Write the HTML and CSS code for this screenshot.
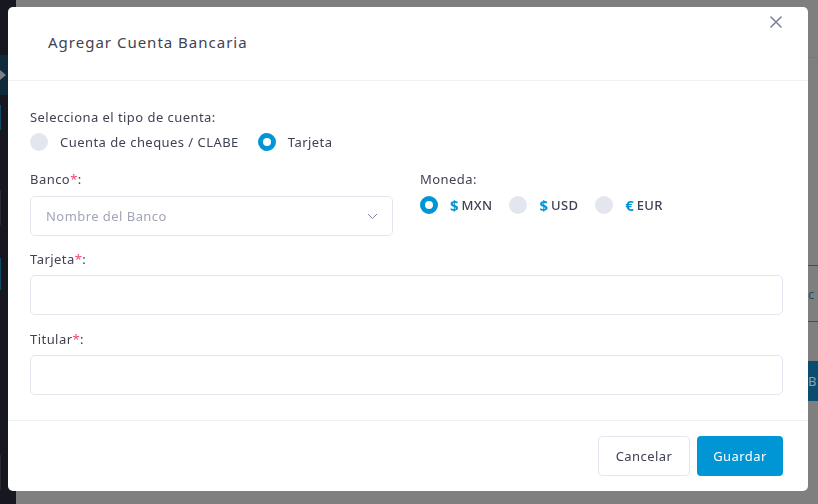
FILE: index.html
```html
<!DOCTYPE html>
<html lang="es">
<head>
<meta charset="utf-8">
<title>Agregar Cuenta Bancaria</title>
<link rel="stylesheet" href="styles.css">
</head>
<body>
<div class="page">
  <aside class="sidebar">
    <div class="side-top"></div>
    <div class="side-item active"><span class="side-arrow"></span></div>
    <div class="side-mark teal m1"></div>
    <div class="side-mark gray m2"></div>
    <div class="side-mark teal m3"></div>
    <div class="side-mark gray m4"></div>
  </aside>
  <main class="main">
    <div class="main-top"></div>
    <div class="main-gap1"></div>
    <div class="main-row"><span class="row-text">c</span></div>
    <div class="main-gap2"></div>
    <div class="main-btn"><span class="btn-text">B</span></div>
  </main>
</div>

<div class="modal" role="dialog" aria-labelledby="modal-title">
  <header class="modal-header">
    <h2 id="modal-title" class="modal-title">Agregar Cuenta Bancaria</h2>
    <button class="close" aria-label="Cerrar">
      <svg width="12" height="12" viewBox="0 0 12 12"><path d="M1 1L11 11M11 1L1 11" stroke="#7e8299" stroke-width="1.6" stroke-linecap="round"/></svg>
    </button>
  </header>
  <section class="modal-body">
    <div class="group">
      <div class="label">Selecciona el tipo de cuenta:</div>
      <div class="radios">
        <label class="radio"><span class="dot"></span><span class="radio-text">Cuenta de cheques / CLABE</span></label>
        <label class="radio"><span class="dot checked"></span><span class="radio-text">Tarjeta</span></label>
      </div>
    </div>
    <div class="split">
      <div class="col">
        <div class="label">Banco<span class="req">*</span>:</div>
        <div class="select">
          <span class="placeholder">Nombre del Banco</span>
          <svg width="11" height="7" viewBox="0 0 11 7"><path d="M1 1L5.5 5.5L10 1" fill="none" stroke="#7e8299" stroke-width="1"/></svg>
        </div>
      </div>
      <div class="col">
        <div class="label">Moneda:</div>
        <div class="radios currency">
          <label class="radio"><span class="dot checked"></span><span class="cur-sym">$</span><span class="cur-code">MXN</span></label>
          <label class="radio"><span class="dot"></span><span class="cur-sym">$</span><span class="cur-code">USD</span></label>
          <label class="radio"><span class="dot"></span><span class="cur-sym">€</span><span class="cur-code">EUR</span></label>
        </div>
      </div>
    </div>
    <div class="field">
      <div class="label">Tarjeta<span class="req">*</span>:</div>
      <div class="input"></div>
    </div>
    <div class="field">
      <div class="label">Titular<span class="req">*</span>:</div>
      <div class="input"></div>
    </div>
  </section>
  <footer class="modal-footer">
    <button class="btn btn-light">Cancelar</button>
    <button class="btn btn-primary">Guardar</button>
  </footer>
</div>
</body>
</html>
```
FILE: styles.css
```css
* { box-sizing: border-box; }
html, body { margin: 0; padding: 0; }
body {
  width: 818px;
  height: 504px;
  overflow: hidden;
  background: #7f7f7f;
  font-family: "Noto Sans", "Liberation Sans", sans-serif;
  color: #3f4254;
}
.page { display: flex; height: 504px; }
.sidebar {
  width: 16px;
  background: #17171f;
  display: flex;
  flex-direction: column;
}
.side-top { height: 55px; }
.side-item.active {
  height: 40px;
  background: #0f2a3a;
  display: flex;
  align-items: center;
}
.side-arrow {
  width: 0; height: 0;
  border-top: 5px solid transparent;
  border-bottom: 5px solid transparent;
  border-left: 6px solid #7a7f86;
}
.side-mark { width: 1px; }
.side-mark.teal { background: #0c4a66; }
.side-mark.gray { background: #2a2a33; }
.m1 { height: 25px; margin-top: 10px; }
.m2 { height: 35px; margin-top: 60px; }
.m3 { height: 32px; margin-top: 33px; }
.m4 { height: 35px; margin-top: 165px; }

.main { flex: 1; display: flex; flex-direction: column; align-items: flex-end; }
.main-top { height: 58px; width: 100%; border-bottom: 1px solid #787878; }
.main-gap1 { height: 207px; }
.main-row {
  width: 10px; height: 57px;
  border-top: 1px solid #1e5b7a;
  border-bottom: 1px solid #1e5b7a;
  display: flex; align-items: center;
  font-size: 13px; color: #1b4f6b; overflow: hidden;
}
.main-gap2 { height: 39px; }
.main-btn {
  width: 10px; height: 40px;
  background: #0b4c70;
  display: flex; align-items: center;
  color: #8aa3b3; font-size: 13px; overflow: hidden;
}

.modal {
  position: fixed;
  left: 8px; top: 7px;
  width: 800px; height: 484px;
  background: #fff;
  border-radius: 5px;
  display: flex;
  flex-direction: column;
  letter-spacing: 0.45px;
}
.modal-header {
  height: 74px;
  border-bottom: 1px solid #eff2f5;
  display: flex;
  align-items: flex-start;
  justify-content: space-between;
  padding: 0 26px 0 40px;
}
.modal-title {
  margin: 25px 0 0;
  font-size: 15px;
  font-weight: 400;
  letter-spacing: 1px;
  color: #3f4254;
}
.close {
  margin-top: 9px;
  border: 0; background: none; padding: 0;
  width: 12px; height: 12px;
  display: flex;
}
.modal-body {
  flex: 1;
  padding: 27px 25px 0 22px;
}
.label {
  font-size: 13px;
  line-height: 18px;
  color: #3f4254;
}
.req { color: #f1416c; }
.radios { display: flex; gap: 19px; margin-top: 7px; }
.radio { display: flex; align-items: center; gap: 12px; font-size: 13px; }
.radio-text { color: #3f4254; }
.dot {
  width: 18px; height: 18px; border-radius: 50%;
  background: #e4e6ef;
  flex: none;
}
.dot.checked {
  background: #fff;
  border: 5.5px solid #0095d4;
}
.split {
  display: grid;
  grid-template-columns: 363px 1fr;
  column-gap: 27px;
  margin-top: 19px;
}
.select {
  margin-top: 8px;
  height: 40px;
  border: 1px solid #e4e6ef;
  border-radius: 5px;
  display: flex;
  align-items: center;
  justify-content: space-between;
  padding: 0 14px 0 15px;
}
.placeholder { font-size: 13px; color: #a1a5b7; }
.currency { margin-top: 7px; gap: 17px; }
.currency .radio { gap: 0; }
.cur-sym { color: #0095d4; font-weight: 700; font-size: 15px; margin-left: 12px; margin-right: 3px; letter-spacing: 0; }
.cur-code { font-size: 13px; font-weight: 500; color: #3f4254; letter-spacing: 0.3px; }
.field { margin-top: 14px; }
.field + .field { margin-top: 15px; }
.input {
  margin-top: 7px;
  height: 40px;
  border: 1px solid #e4e6ef;
  border-radius: 5px;
}
.modal-footer {
  height: 71px;
  border-top: 1px solid #eff2f5;
  display: flex;
  justify-content: flex-end;
  align-items: flex-start;
  gap: 7px;
  padding: 15px 25px 0 0;
}
.btn {
  height: 40px;
  border-radius: 4px;
  font-family: inherit;
  font-size: 13px;
  letter-spacing: 0.45px;
  padding: 0;
  cursor: pointer;
}
.btn-light {
  width: 92px;
  background: #fff;
  border: 1px solid #e4e6ef;
  color: #3f4254;
}
.btn-primary {
  width: 86px;
  background: #0095d4;
  border: 0;
  color: #fff;
}
```
